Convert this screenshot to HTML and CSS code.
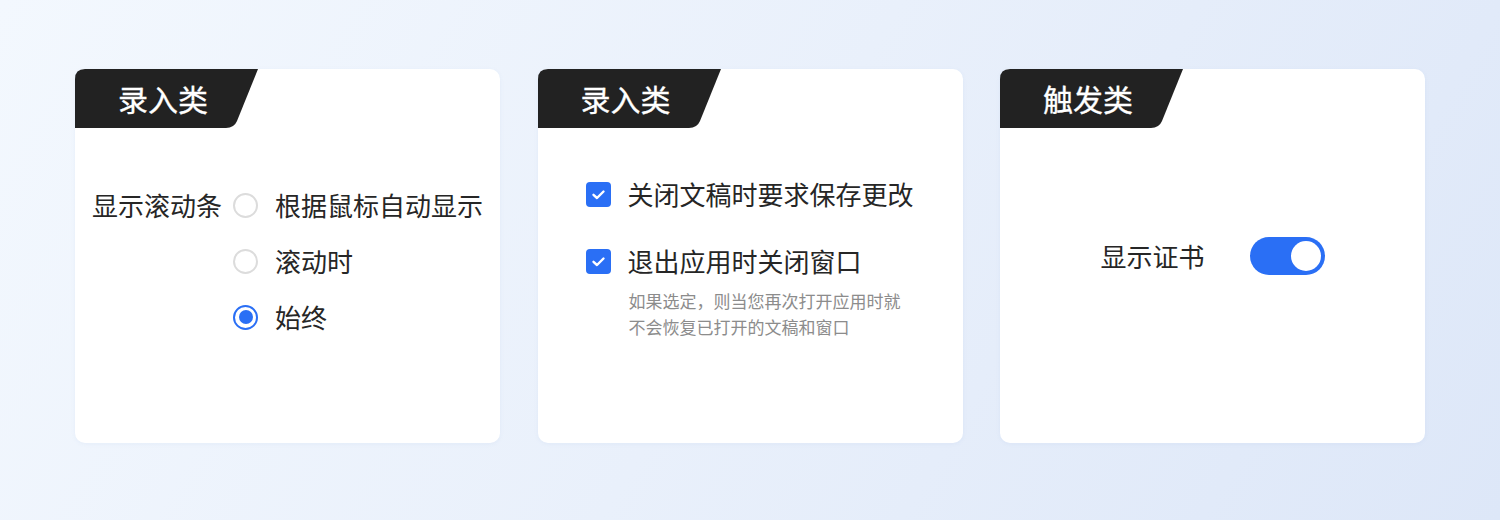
FILE: index.html
```html
<!DOCTYPE html>
<html lang="zh-CN">
<head>
<meta charset="utf-8">
<title>设置</title>
<link rel="stylesheet" href="styles.css">
</head>
<body>
<div class="page">
  <section class="card">
    <div class="tab">
      <svg class="tab-bg" viewBox="0 0 183 59" width="183" height="59" aria-hidden="true"><path d="M0 10 Q0 0 10 0 H183 L162 52 Q159 59 151 59 H0 Z" fill="#222222"/></svg>
      <span class="tab-title">录入类</span>
    </div>
    <div class="body body-radio">
      <div class="field">
        <div class="field-label">显示滚动条</div>
        <div class="options">
          <div class="option"><span class="radio"></span><span class="option-text">根据鼠标自动显示</span></div>
          <div class="option"><span class="radio"></span><span class="option-text">滚动时</span></div>
          <div class="option"><span class="radio radio-on"></span><span class="option-text">始终</span></div>
        </div>
      </div>
    </div>
  </section>

  <section class="card">
    <div class="tab">
      <svg class="tab-bg" viewBox="0 0 183 59" width="183" height="59" aria-hidden="true"><path d="M0 10 Q0 0 10 0 H183 L162 52 Q159 59 151 59 H0 Z" fill="#222222"/></svg>
      <span class="tab-title">录入类</span>
    </div>
    <div class="body body-check">
      <div class="checks">
        <div class="check-row">
          <span class="checkbox"><svg viewBox="0 0 25 25" width="25" height="25"><path d="M7.5 12.8 L11 16 L17.5 9.5" fill="none" stroke="#fff" stroke-width="2.4" stroke-linecap="round" stroke-linejoin="round"/></svg></span>
          <span class="check-text">关闭文稿时要求保存更改</span>
        </div>
        <div class="check-row check-row-2">
          <span class="checkbox"><svg viewBox="0 0 25 25" width="25" height="25"><path d="M7.5 12.8 L11 16 L17.5 9.5" fill="none" stroke="#fff" stroke-width="2.4" stroke-linecap="round" stroke-linejoin="round"/></svg></span>
          <span class="check-text">退出应用时关闭窗口</span>
        </div>
        <p class="hint">如果选定，则当您再次打开应用时就<br>不会恢复已打开的文稿和窗口</p>
      </div>
    </div>
  </section>

  <section class="card">
    <div class="tab">
      <svg class="tab-bg" viewBox="0 0 183 59" width="183" height="59" aria-hidden="true"><path d="M0 10 Q0 0 10 0 H183 L162 52 Q159 59 151 59 H0 Z" fill="#222222"/></svg>
      <span class="tab-title">触发类</span>
    </div>
    <div class="body body-switch">
      <div class="switch-row">
        <span class="switch-label">显示证书</span>
        <span class="switch"><span class="knob"></span></span>
      </div>
    </div>
  </section>
</div>
</body>
</html>
```

FILE: styles.css
```css
* { box-sizing: border-box; }
html, body {
  margin: 0;
  padding: 0;
  width: 1500px;
  height: 520px;
  overflow: hidden;
}
body {
  font-family: "Noto Sans CJK SC", "Noto Sans", sans-serif;
  color: #262626;
  background: linear-gradient(120deg, #f3f8fe 0%, #e9f0fb 50%, #dde7f8 100%);
}
.page {
  display: flex;
  gap: 37.5px;
  padding: 69px 75px 0;
}
.card {
  width: 425px;
  height: 374px;
  background: #ffffff;
  border-radius: 10px;
  box-shadow: 0 1px 4px rgba(120, 150, 200, 0.08);
  display: flex;
  flex-direction: column;
}
.tab {
  position: relative;
  width: 183px;
  height: 59px;
  flex: none;
}
.tab-bg {
  position: absolute;
  left: 0;
  top: 0;
  display: block;
}
.tab-title {
  position: relative;
  display: block;
  width: 176px;
  text-align: center;
  color: #ffffff;
  font-size: 30px;
  font-weight: 400;
  line-height: 59px;
  -webkit-text-stroke: 0.3px #ffffff;
}
.body {
  display: flex;
  justify-content: center;
}
.body-radio { padding-top: 49px; }
.body-check { padding-top: 46px; }
.body-switch { padding-top: 109px; }

/* radio */
.field {
  display: flex;
  gap: 11px;
}
.field-label {
  font-size: 26px;
  line-height: 56px;
}
.options {
  display: flex;
  flex-direction: column;
}
.option {
  display: flex;
  align-items: center;
  height: 56px;
  gap: 17px;
}
.option-text {
  font-size: 26px;
  line-height: 56px;
}
.radio {
  width: 25px;
  height: 25px;
  border-radius: 50%;
  border: 2px solid #dcdcdc;
  flex: none;
  display: flex;
  align-items: center;
  justify-content: center;
}
.radio-on {
  border-color: #2a6ff5;
}
.radio-on::after {
  content: "";
  width: 14px;
  height: 14px;
  border-radius: 50%;
  background: #2a6ff5;
}

/* checkbox */
.checks {
  display: flex;
  flex-direction: column;
}
.check-row {
  display: flex;
  align-items: center;
  gap: 16px;
  height: 40px;
}
.check-row-2 { margin-top: 27px; }
.checkbox {
  width: 25px;
  height: 25px;
  border-radius: 4px;
  background: #2a6ff5;
  flex: none;
  display: block;
}
.checkbox svg { display: block; }
.check-text {
  font-size: 26px;
  line-height: 40px;
}
.hint {
  margin: 7px 0 0;
  padding-left: 42px;
  font-size: 17px;
  line-height: 26px;
  color: #8c8c8c;
}

/* switch */
.switch-row {
  display: flex;
  align-items: center;
  gap: 45px;
  height: 38px;
}
.switch-label {
  font-size: 26px;
  line-height: 38px;
}
.switch {
  width: 75px;
  height: 38px;
  border-radius: 19px;
  background: #2a6ff5;
  display: flex;
  align-items: center;
  justify-content: flex-end;
  padding-right: 4px;
}
.knob {
  width: 30px;
  height: 30px;
  border-radius: 50%;
  background: #ffffff;
}
```
